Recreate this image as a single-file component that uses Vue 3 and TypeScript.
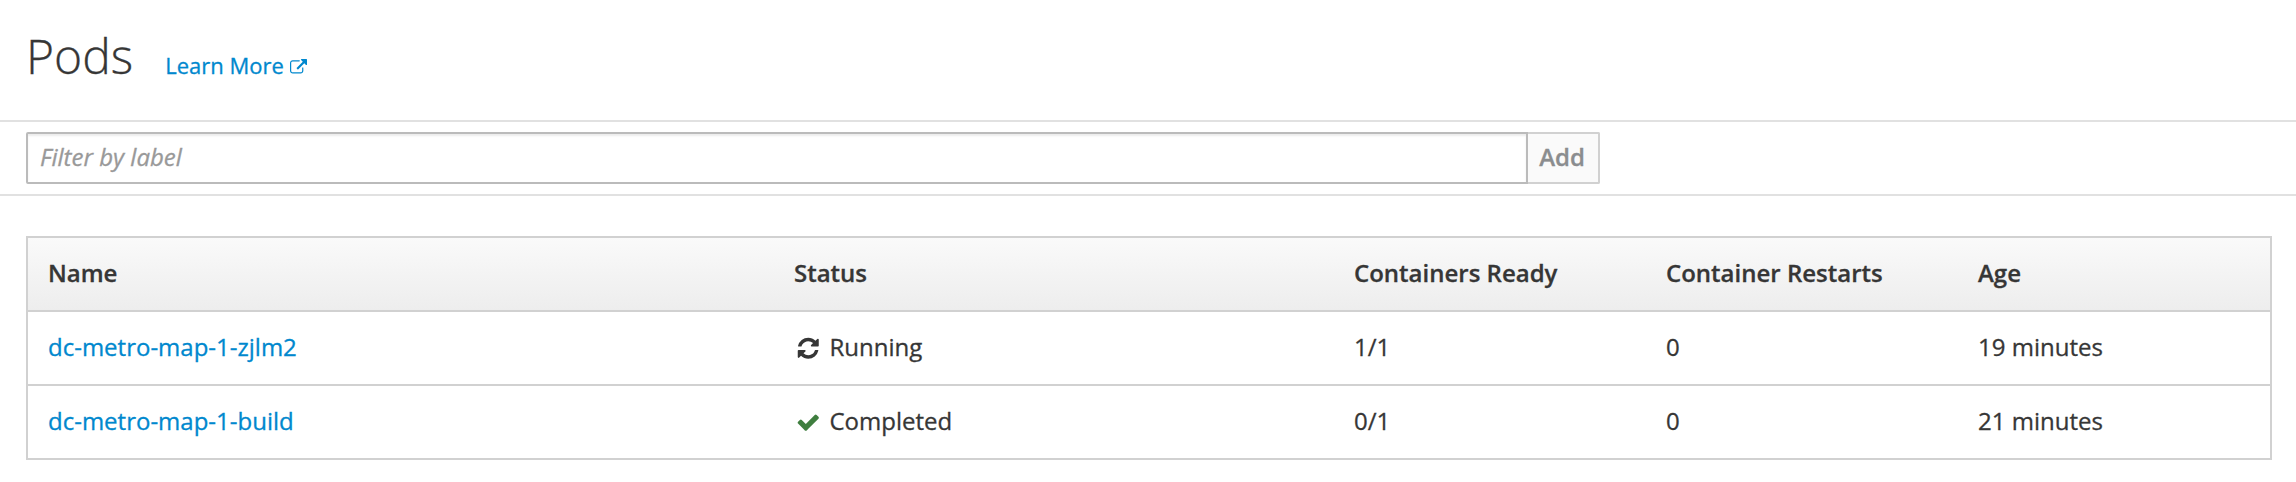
<script setup lang="ts">
import { ref } from 'vue'

interface Pod {
  name: string
  status: 'Running' | 'Completed'
  ready: string
  restarts: number
  age: string
}

const label = ref('')
const columns = ['Name', 'Status', 'Containers Ready', 'Container Restarts', 'Age']
const pods: Pod[] = [
  { name: 'dc-metro-map-1-zjlm2', status: 'Running', ready: '1/1', restarts: 0, age: '19 minutes' },
  { name: 'dc-metro-map-1-build', status: 'Completed', ready: '0/1', restarts: 0, age: '21 minutes' },
]
</script>

<template>
  <main class="page">
    <header class="header">
      <h1 class="title">Pods</h1>
      <a class="learn">Learn More<svg class="ext" viewBox="0 0 1792 1792"><path d="M1408 928v320q0 119-84.500 203.500t-203.500 84.500h-832q-119 0-203.500-84.500t-84.500-203.500v-832q0-119 84.500-203.500t203.500-84.500h704q14 0 23 9t9 23v64q0 14-9 23t-23 9h-704q-66 0-113 47t-47 113v832q0 66 47 113t113 47h832q66 0 113-47t47-113v-320q0-14 9-23t23-9h64q14 0 23 9t9 23zm384-864v512q0 26-19 45t-45 19-45-19l-176-176-652 652q-10 10-23 10t-23-10l-114-114q-10-10-10-23t10-23l652-652-176-176q-19-19-19-45t19-45 45-19h512q26 0 45 19t19 45z" /></svg></a>
    </header>
    <div class="filter">
      <input v-model="label" class="field" type="text" placeholder="Filter by label">
      <button class="add" disabled>Add</button>
    </div>
    <table class="pods">
      <colgroup>
        <col class="c-name"><col class="c-status"><col class="c-num"><col class="c-num"><col>
      </colgroup>
      <thead>
        <tr><th v-for="c in columns" :key="c">{{ c }}</th></tr>
      </thead>
      <tbody>
        <tr v-for="p in pods" :key="p.name">
          <td><a class="link">{{ p.name }}</a></td>
          <td>
            <div class="status">
              <svg v-if="p.status === 'Running'" class="icon" viewBox="0 0 1792 1792"><path d="M1639 1056q0 5-1 7-64 268-268 434.500t-478 166.500q-146 0-282.500-55t-243.500-157l-129 129q-19 19-45 19t-45-19-19-45v-448q0-26 19-45t45-19h448q26 0 45 19t19 45-19 45l-137 137q71 66 161 102t187 36q134 0 250-65t186-179q11-17 53-117 8-23 30-23h192q13 0 22.500 9.500t9.500 22.500zm25-800v448q0 26-19 45t-45 19h-448q-26 0-45-19t-19-45 19-45l138-138q-148-137-349-137-134 0-250 65t-186 179q-11 17-53 117-8 23-30 23h-199q-13 0-22.500-9.500t-9.500-22.500v-7q65-268 270-434.500t480-166.500q146 0 284 55.500t245 156.500l130-129q19-19 45-19t45 19 19 45z" /></svg>
              <svg v-else class="icon ok" viewBox="0 0 1792 1792"><path d="M1671 566q0 40-28 68l-724 724-136 136q-28 28-68 28t-68-28l-136-136-362-362q-28-28-28-68t28-68l136-136q28-28 68-28t68 28l294 295 656-657q28-28 68-28t68 28l136 136q28 28 28 68z" /></svg>
              <span>{{ p.status }}</span>
            </div>
          </td>
          <td>{{ p.ready }}</td>
          <td>{{ p.restarts }}</td>
          <td>{{ p.age }}</td>
        </tr>
      </tbody>
    </table>
  </main>
</template>

<style>
body {
  background: #fff;
}
</style>

<style scoped>
.page {
  height: 482px;
  overflow: hidden;
  font: 24px/40px "Open Sans", "Noto Sans", sans-serif;
  color: #363636;
  -webkit-text-stroke: 0.3px;
}
.header {
  display: flex;
  align-items: baseline;
  gap: 32px;
  box-sizing: border-box;
  height: 120px;
  padding: 23px 26px 0;
}
.title {
  margin: 0;
  font-size: 48px;
  font-weight: 300;
  line-height: 66px;
}
.learn {
  font-size: 22px;
  line-height: 30px;
  color: #0088ce;
}
.ext {
  width: 17px;
  height: 17px;
  margin-left: 6px;
  vertical-align: -2px;
  fill: currentColor;
}
.filter {
  display: flex;
  box-sizing: border-box;
  height: 76px;
  padding: 10px 26px;
  border-top: 2px solid #e1e1e1;
  border-bottom: 2px solid #e1e1e1;
}
.field {
  box-sizing: border-box;
  width: 1502px;
  height: 52px;
  margin: 0;
  padding: 0 12px 3px;
  border: 2px solid #bbb;
  border-radius: 2px 0 0 2px;
  outline: 0;
  box-shadow: inset 0 2px 2px rgba(3, 3, 3, 0.075);
  font: inherit;
  color: inherit;
}
.field::placeholder {
  font-style: italic;
  color: #999;
  opacity: 1;
}
.add {
  box-sizing: border-box;
  width: 72px;
  height: 52px;
  padding: 0 2px 2px 0;
  border: 2px solid #d1d1d1;
  border-left: 0;
  border-radius: 0 2px 2px 0;
  background: #fafafa;
  font: inherit;
  font-weight: 600;
  color: #8b8d8f;
}
.pods {
  width: 2246px;
  margin: 40px 0 0 26px;
  table-layout: fixed;
  border-collapse: collapse;
}
.c-name {
  width: 747px;
}
.c-status {
  width: 560px;
}
.c-num {
  width: 312px;
}
.pods,
.pods tr {
  border: 2px solid #d1d1d1;
}
.pods thead {
  background: linear-gradient(#fafafa, #ededed);
}
.pods th,
.pods td {
  box-sizing: border-box;
  height: 74px;
  padding: 0 20px 2px;
  text-align: left;
  font-weight: 400;
  vertical-align: middle;
}
.pods th {
  font-weight: 600;
}
.link {
  color: #0088ce;
}
.status {
  display: flex;
  align-items: center;
  gap: 9px;
  padding-left: 2px;
}
.icon {
  width: 24.5px;
  height: 24.5px;
  margin-top: 2px;
  fill: currentColor;
}
.ok {
  color: #3f7e3f;
}
</style>
